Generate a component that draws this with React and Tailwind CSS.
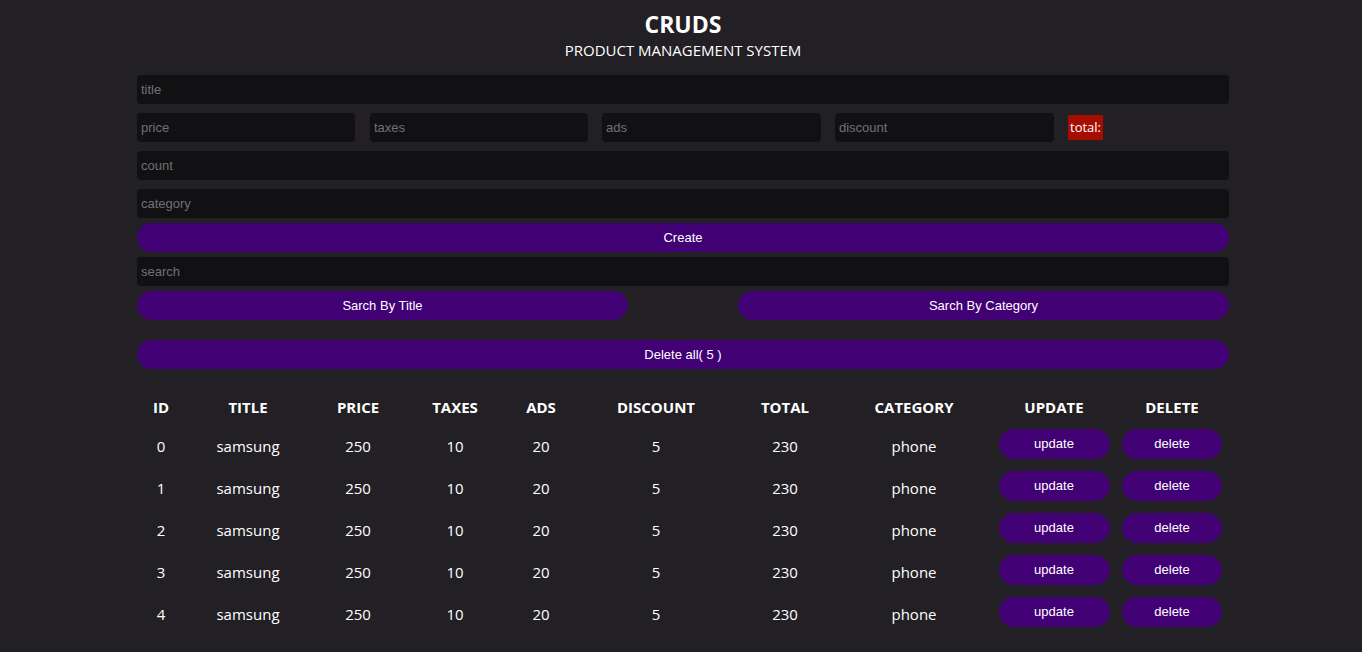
const rows = [0, 1, 2, 3, 4].map((id) => ({
  id,
  title: "samsung",
  price: 250,
  taxes: 10,
  ads: 20,
  discount: 5,
  total: 230,
  category: "phone",
}));

const cols = [
  ["ID", "w-[48px]"],
  ["TITLE", "w-[126px]"],
  ["PRICE", "w-[94px]"],
  ["TAXES", "w-[100px]"],
  ["ADS", "w-[72px]"],
  ["DISCOUNT", "w-[158px]"],
  ["TOTAL", "w-[100px]"],
  ["CATEGORY", "w-[158px]"],
  ["UPDATE", "w-[122px]"],
  ["DELETE", "w-[114px]"],
];

function Field({ placeholder, className = "" }) {
  return (
    <input
      placeholder={placeholder}
      className={`h-[29px] rounded-[4px] bg-[#111013] px-[4px] text-[13px] text-white placeholder:text-[#737175] outline-none ${className}`}
    />
  );
}

function Pill({ children, className = "" }) {
  return (
    <button
      className={`h-[29px] rounded-full bg-[#420075] text-[13px] text-white ${className}`}
    >
      {children}
    </button>
  );
}

export default function App() {
  return (
    <div
      className="min-h-[652px] bg-[#222024] text-white"
      style={{ fontFamily: "Arial, 'Liberation Sans', sans-serif" }}
    >
      <div className="ml-[137px] w-[1092px] flex flex-col">
        {/* header */}
        <div className="flex flex-col items-center pt-[9px] font-['Open_Sans',sans-serif]">
          <h1 className="text-[23px] font-bold leading-[30px]">CRUDS</h1>
          <h2 className="text-[15px] leading-[20px] mt-[1px]">
            PRODUCT MANAGEMENT SYSTEM
          </h2>
        </div>

        {/* inputs */}
        <div className="flex flex-col mt-[15px]">
          <Field placeholder="title" className="w-full" />
          <div className="flex items-center mt-[9px]">
            <Field placeholder="price" className="w-[218px]" />
            <Field placeholder="taxes" className="w-[218px] ml-[15px]" />
            <Field placeholder="ads" className="w-[219px] ml-[14px]" />
            <Field placeholder="discount" className="w-[219px] ml-[14px]" />
            <span className="ml-[14px] bg-[#a50d00] px-[2px] py-[3px] text-[13px] leading-[19px] font-['Open_Sans',sans-serif]">
              total:
            </span>
          </div>
          <Field placeholder="count" className="w-full mt-[9px]" />
          <Field placeholder="category" className="w-full mt-[9px]" />
          <Pill className="w-full mt-[5px]">Create</Pill>
          <Field placeholder="search" className="w-full mt-[5px]" />
          <div className="flex justify-between mt-[5px]">
            <Pill className="w-[491px]">Sarch By Title</Pill>
            <Pill className="w-[491px]">Sarch By Category</Pill>
          </div>
          <Pill className="w-full mt-[20px]">Delete all( 5 )</Pill>
        </div>

        {/* table */}
        <table className="mt-[22px] border-collapse font-['Open_Sans',sans-serif] text-[15px]">
          <thead>
            <tr className="h-[34px]">
              {cols.map(([c, w]) => (
                <th key={c} className={`${w} p-0 pb-[2px] font-bold text-center`}>
                  {c}
                </th>
              ))}
            </tr>
          </thead>
          <tbody>
            {rows.map((r) => (
              <tr key={r.id} className="h-[42px]">
                <td className="text-center p-0">{r.id}</td>
                <td className="text-center p-0">{r.title}</td>
                <td className="text-center p-0">{r.price}</td>
                <td className="text-center p-0">{r.taxes}</td>
                <td className="text-center p-0">{r.ads}</td>
                <td className="text-center p-0">{r.discount}</td>
                <td className="text-center p-0">{r.total}</td>
                <td className="text-center p-0">{r.category}</td>
                <td className="p-0 pb-[4px]">
                  <button className="block mx-auto w-[111px] h-[30px] rounded-full bg-[#420075] text-[13px] font-['Arial','Liberation_Sans',sans-serif]">
                    update
                  </button>
                </td>
                <td className="p-0 pb-[4px]">
                  <button className="block mx-auto w-[100px] h-[30px] rounded-full bg-[#420075] text-[13px] font-['Arial','Liberation_Sans',sans-serif]">
                    delete
                  </button>
                </td>
              </tr>
            ))}
          </tbody>
        </table>
      </div>
    </div>
  );
}
